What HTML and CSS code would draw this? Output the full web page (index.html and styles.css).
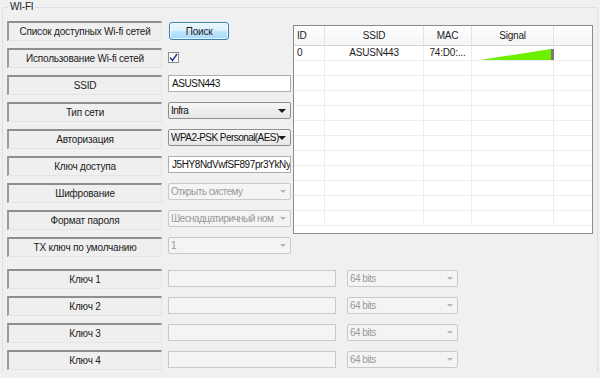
FILE: index.html
```html
<!DOCTYPE html>
<html lang="ru">
<head>
    <meta charset="UTF-8">
    <title>WI-FI</title>
    <link rel="stylesheet" href="styles.css">
</head>
<body>
    <fieldset class="group">
        <legend>WI-FI</legend>
        <div class="top">
            <div class="rows">
                <div class="row">
                    <div class="label">Список доступных Wi-fi сетей</div>
                    <button class="btn">Поиск</button>
                </div>
                <div class="row">
                    <div class="label">Использование Wi-fi сетей</div>
                    <span class="check">
                        <svg width="9" height="9" viewBox="0 0 9 9"><path d="M1 4.5 L3.5 7.5 L8 1" fill="none" stroke="#2a3a9a" stroke-width="1.4"/></svg>
                    </span>
                </div>
                <div class="row">
                    <div class="label">SSID</div>
                    <div class="field">ASUSN443</div>
                </div>
                <div class="row">
                    <div class="label">Тип сети</div>
                    <div class="field select">Infra<span class="arrow"></span></div>
                </div>
                <div class="row">
                    <div class="label">Авторизация</div>
                    <div class="field select">WPA2-PSK Personal(AES)<span class="arrow"></span></div>
                </div>
                <div class="row">
                    <div class="label">Ключ доступа</div>
                    <div class="field">J5HY8NdVwfSF897pr3YkNy<span class="caret"></span></div>
                </div>
                <div class="row">
                    <div class="label">Шифрование</div>
                    <div class="field select off">Открыть систему<span class="arrow"></span></div>
                </div>
                <div class="row">
                    <div class="label">Формат пароля</div>
                    <div class="field select off">Шеснадцатиричный ном<span class="arrow"></span></div>
                </div>
                <div class="row">
                    <div class="label">TX ключ по умолчанию</div>
                    <div class="field select off">1<span class="arrow"></span></div>
                </div>
            </div>

            <div class="grid">
                <div class="grid-row head">
                    <div class="c-id">ID</div>
                    <div class="c-ssid">SSID</div>
                    <div class="c-mac">MAC</div>
                    <div class="c-sig">Signal</div>
                    <div class="c-rest"></div>
                </div>
                <div class="grid-row">
                    <div class="c-id">0</div>
                    <div class="c-ssid">ASUSN443</div>
                    <div class="c-mac">74:D0:...</div>
                    <div class="c-sig">
                        <svg class="signal" width="74" height="12" viewBox="0 0 74 12">
                            <polygon points="0,12 71,1 71,12" fill="#6cf000"/>
                            <rect x="71" y="1" width="3" height="11" fill="#7a7a7a"/>
                        </svg>
                    </div>
                    <div class="c-rest"></div>
                </div>
                <div class="grid-row"><div class="c-id"></div><div class="c-ssid"></div><div class="c-mac"></div><div class="c-sig"></div><div class="c-rest"></div></div>
                <div class="grid-row"><div class="c-id"></div><div class="c-ssid"></div><div class="c-mac"></div><div class="c-sig"></div><div class="c-rest"></div></div>
                <div class="grid-row"><div class="c-id"></div><div class="c-ssid"></div><div class="c-mac"></div><div class="c-sig"></div><div class="c-rest"></div></div>
                <div class="grid-row"><div class="c-id"></div><div class="c-ssid"></div><div class="c-mac"></div><div class="c-sig"></div><div class="c-rest"></div></div>
                <div class="grid-row"><div class="c-id"></div><div class="c-ssid"></div><div class="c-mac"></div><div class="c-sig"></div><div class="c-rest"></div></div>
                <div class="grid-row"><div class="c-id"></div><div class="c-ssid"></div><div class="c-mac"></div><div class="c-sig"></div><div class="c-rest"></div></div>
                <div class="grid-row"><div class="c-id"></div><div class="c-ssid"></div><div class="c-mac"></div><div class="c-sig"></div><div class="c-rest"></div></div>
                <div class="grid-row"><div class="c-id"></div><div class="c-ssid"></div><div class="c-mac"></div><div class="c-sig"></div><div class="c-rest"></div></div>
                <div class="grid-row"><div class="c-id"></div><div class="c-ssid"></div><div class="c-mac"></div><div class="c-sig"></div><div class="c-rest"></div></div>
                <div class="grid-row"><div class="c-id"></div><div class="c-ssid"></div><div class="c-mac"></div><div class="c-sig"></div><div class="c-rest"></div></div>
                <div class="grid-row"><div class="c-id"></div><div class="c-ssid"></div><div class="c-mac"></div><div class="c-sig"></div><div class="c-rest"></div></div>
            </div>
        </div>

        <div class="keys">
            <div class="row">
                <div class="label">Ключ 1</div>
                <div class="field wide off"></div>
                <div class="field bits select off">64 bits<span class="arrow"></span></div>
            </div>
            <div class="row">
                <div class="label">Ключ 2</div>
                <div class="field wide off"></div>
                <div class="field bits select off">64 bits<span class="arrow"></span></div>
            </div>
            <div class="row">
                <div class="label">Ключ 3</div>
                <div class="field wide off"></div>
                <div class="field bits select off">64 bits<span class="arrow"></span></div>
            </div>
            <div class="row">
                <div class="label">Ключ 4</div>
                <div class="field wide off"></div>
                <div class="field bits select off">64 bits<span class="arrow"></span></div>
            </div>
        </div>
    </fieldset>
</body>
</html>
```

FILE: styles.css
```css
body {
    margin: 0;
    background-color: #f0f0f0;
    font-family: 'Liberation Sans', Arial, sans-serif;
    font-size: 10px;
    letter-spacing: -0.2px;
    color: #1b1b1b;
}
.group {
    margin: 0 3px 0 2px;
    padding: 7px 4px 2px 4px;
    border: 1px solid #dcdfe3;
    border-bottom: none;
    border-radius: 3px 3px 0 0;
}
.group legend {
    margin-left: 1px;
    padding: 0 2px;
    line-height: 14px;
    color: #222;
}
.top {
    display: flex;
    align-items: flex-start;
}
.rows {
    width: 286px;
}
.row {
    display: flex;
    align-items: flex-start;
    height: 20px;
    margin-bottom: 7px;
}
.keys .row:last-child {
    margin-bottom: 0;
}
.label {
    width: 155px;
    height: 20px;
    box-sizing: border-box;
    border-style: solid;
    border-width: 2px 1px 1px 2px;
    border-color: #8e8e8e #e4e4e4 #e4e4e4 #9a9a9a;
    background-color: #efefef;
    text-align: center;
    line-height: 17px;
    margin-right: 6px;
    flex-shrink: 0;
}
.btn {
    margin: 1px 0 0 1px;
    width: 60px;
    height: 18px;
    padding: 0;
    font-family: inherit;
    font-size: 10px;
    letter-spacing: -0.2px;
    color: #1b1b1b;
    border: 1px solid #3c7fb1;
    border-radius: 3px;
    background: linear-gradient(#eaf6fd, #d9f0fc 50%, #bee6fd 50%, #a7d9f5);
    box-shadow: inset 0 0 0 1px rgba(255,255,255,0.7);
}
.check {
    margin: 4px 0 0 0;
    width: 11px;
    height: 11px;
    box-sizing: border-box;
    border: 1px solid #8f8f8f;
    background: linear-gradient(#f4f4f4, #ffffff);
    display: flex;
    align-items: center;
    justify-content: center;
}
.field {
    position: relative;
    width: 123px;
    height: 17px;
    box-sizing: border-box;
    border: 1px solid #abadb3;
    background-color: #ffffff;
    padding: 0 3px;
    line-height: 15px;
    letter-spacing: -0.4px;
    white-space: nowrap;
    overflow: hidden;
    color: #111;
}
.select {
    border-color: #8e8f8f;
    border-radius: 2px;
    letter-spacing: -0.55px;
    padding-left: 2px;
    background: linear-gradient(#f6f6f6, #e6e6e6);
}
.off {
    color: #9a9a9a;
    border-color: #c9c9c9;
    background: #f4f4f4;
}
.arrow {
    position: absolute;
    right: 4px;
    top: 6px;
    border-left: 4px solid transparent;
    border-right: 4px solid transparent;
    border-top: 4px solid #1b1b1b;
}
.off .arrow {
    border-top-color: #b5b5b5;
    border-left-width: 3px;
    border-right-width: 3px;
    border-top-width: 3px;
}
.caret {
    display: inline-block;
    width: 1px;
    height: 11px;
    background-color: #000;
    vertical-align: -2px;
}
.grid {
    margin-top: 4px;
    width: 300px;
    height: 209px;
    box-sizing: border-box;
    border: 1px solid #8b8b8b;
    background-color: #ffffff;
    overflow: hidden;
}
.grid-row {
    display: flex;
    height: 14px;
    border-bottom: 1px solid #ededed;
    line-height: 14px;
}
.grid-row > div {
    border-right: 1px solid #ededed;
    box-sizing: border-box;
    text-align: center;
    position: relative;
}
.grid-row.head {
    height: 19px;
    line-height: 19px;
    background: linear-gradient(#ffffff, #f3f4f6);
    border-bottom: 1px solid #d5d5d5;
}
.grid-row.head > div {
    border-right-color: #e3e3e3;
}
.c-id {
    width: 31px;
    text-align: left !important;
    padding-left: 3px;
}
.c-ssid {
    width: 99px;
}
.c-mac {
    width: 48px;
}
.c-sig {
    width: 82px;
}
.c-rest {
    flex: 1;
    border-right: none !important;
}
.signal {
    position: absolute;
    left: 8px;
    bottom: 0;
}
.keys {
    margin-top: 5px;
}
.keys .field {
    margin-top: 1px;
}
.wide {
    width: 168px;
    margin-right: 11px;
}
.bits {
    width: 111px;
}
```
